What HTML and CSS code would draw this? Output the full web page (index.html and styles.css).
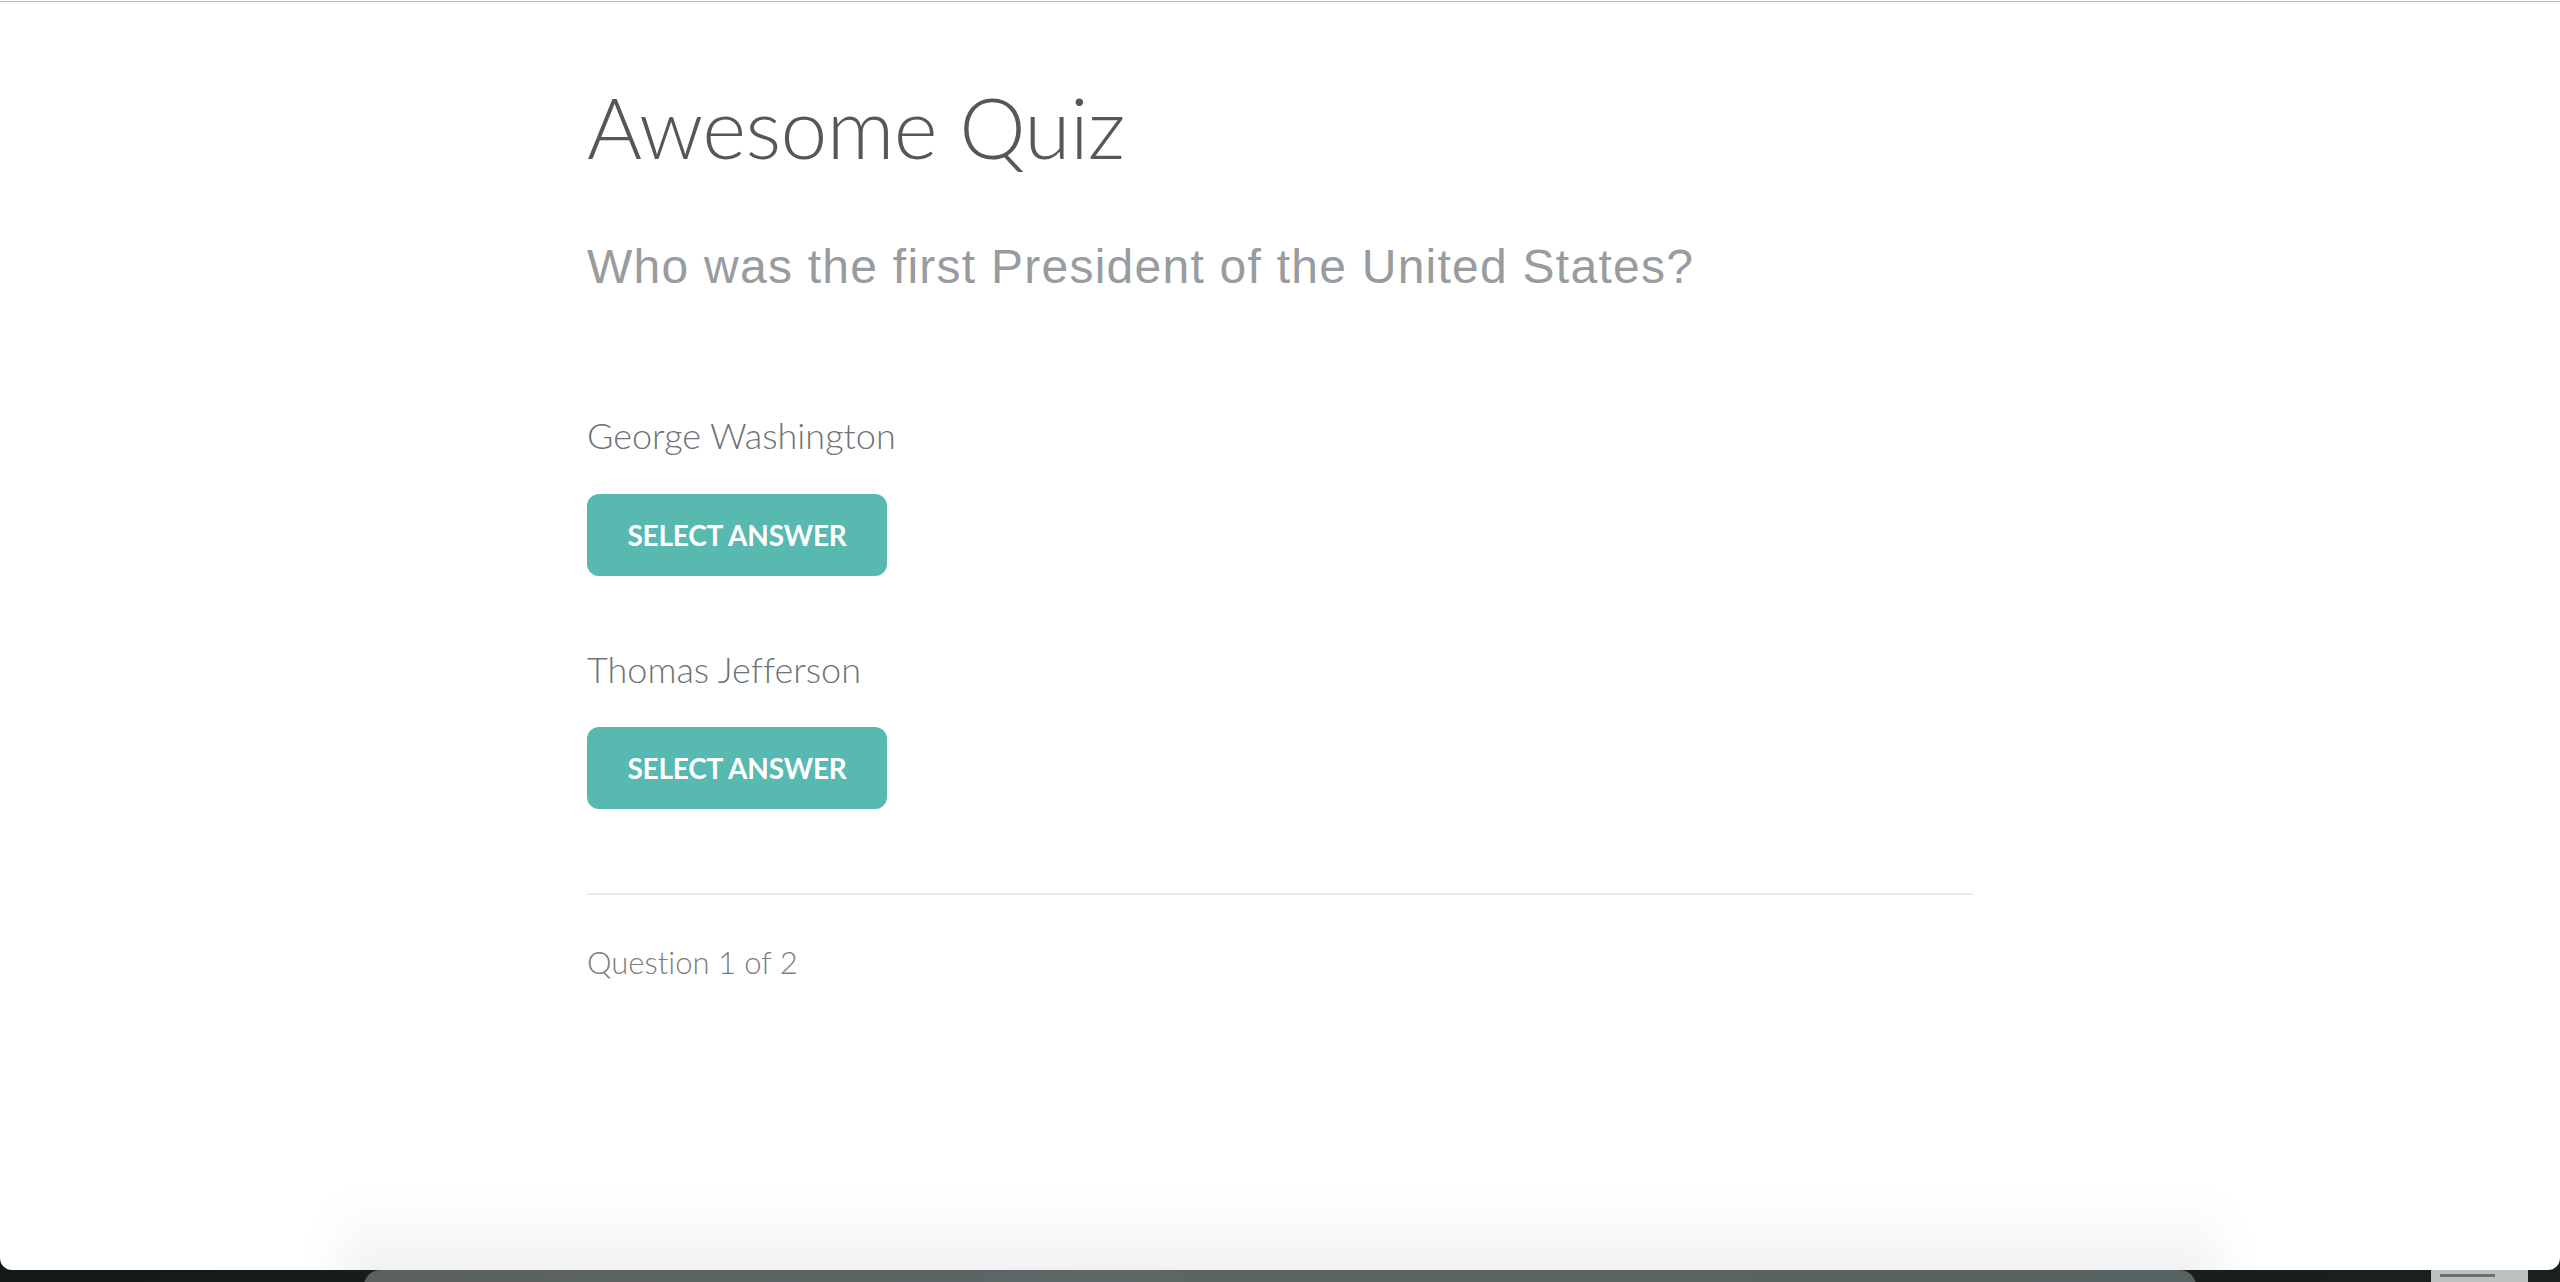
FILE: index.html
```html
<!DOCTYPE html>
<html lang="en">
<head>
<meta charset="utf-8">
<title>Awesome Quiz</title>
<link rel="stylesheet" href="styles.css">
</head>
<body>
<div class="desktop">
  <div class="window">
    <div class="topline"></div>
    <main class="quiz">
      <h1 class="title">Awesome Quiz</h1>
      <h2 class="question">Who was the first President of the United States?</h2>
      <div class="answers">
        <div class="answer">
          <p class="answer-text">George Washington</p>
          <button class="btn">SELECT ANSWER</button>
        </div>
        <div class="answer">
          <p class="answer-text">Thomas Jefferson</p>
          <button class="btn">SELECT ANSWER</button>
        </div>
      </div>
      <hr class="divider">
      <p class="progress">Question 1 of 2</p>
    </main>
    <div class="dock-glow"></div>
  </div>
  <div class="dock"></div>
  <div class="dock-item"><span class="dock-item-bar"></span></div>
</div>
</body>
</html>
```
FILE: styles.css
```css
html, body {
  margin: 0;
  padding: 0;
}
body {
  width: 2560px;
  height: 1282px;
  overflow: hidden;
  background: #181c1a;
  font-variant-ligatures: none;
}
.desktop {
  position: relative;
  width: 2560px;
  height: 1282px;
  background: linear-gradient(90deg, #141816 0%, #1d221f 30%, #161a18 60%, #1c201e 100%);
}
.window {
  position: relative;
  height: 1270px;
  background: #ffffff;
  border-radius: 0 0 12px 12px;
  overflow: hidden;
}
.topline {
  height: 1px;
  margin-top: 1px;
  background: #bdbdbd;
}
.quiz {
  width: 1386px;
  margin: 0 auto;
  padding-top: 75px;
  display: flex;
  flex-direction: column;
  align-items: flex-start;
}
.title {
  margin: 0;
  font-family: Lato, "Liberation Sans", sans-serif;
  font-weight: 300;
  font-size: 84px;
  line-height: 1.2;
  color: #54585c;
  letter-spacing: -0.6px;
}
.question {
  margin: 60px 0 0;
  font-family: "Liberation Sans", Arial, sans-serif;
  font-weight: 400;
  font-size: 48px;
  line-height: 1.2;
  color: #999c9f;
  letter-spacing: 1.25px;
}
.answers {
  margin-top: 119px;
  display: flex;
  flex-direction: column;
  align-items: flex-start;
  gap: 72px;
}
.answer {
  display: flex;
  flex-direction: column;
  align-items: flex-start;
  gap: 36px;
}
.answer-text {
  margin: 0;
  font-family: Lato, "Liberation Sans", sans-serif;
  font-weight: 300;
  font-size: 36px;
  line-height: 1.2;
  color: #6f7377;
}
.btn {
  display: inline-flex;
  align-items: center;
  justify-content: center;
  width: 300px;
  height: 82px;
  padding: 0;
  border: 0;
  border-radius: 12px;
  background: #58b9b1;
  color: #ffffff;
  font-family: Lato, "Liberation Sans", sans-serif;
  font-weight: 700;
  font-size: 28px;
  letter-spacing: -0.2px;
  cursor: pointer;
}
.divider {
  align-self: stretch;
  margin: 84px 0 0;
  height: 2px;
  border: 0;
  background: #e9e9e9;
}
.progress {
  margin: 49px 0 0;
  font-family: Lato, "Liberation Sans", sans-serif;
  font-weight: 300;
  font-size: 31px;
  line-height: 1.2;
  color: #7a7e81;
}
.dock-glow {
  position: absolute;
  left: 340px;
  width: 1880px;
  bottom: -40px;
  height: 110px;
  background: linear-gradient(to bottom, rgba(0,0,0,0) 0%, rgba(0,0,0,0.035) 40%, rgba(0,0,0,0.08) 100%);
  filter: blur(22px);
  pointer-events: none;
}
.dock {
  position: absolute;
  left: 364px;
  top: 1270px;
  width: 1832px;
  height: 30px;
  border-radius: 16px 16px 0 0;
  background: linear-gradient(90deg, #5a6160 0%, #5e6566 40%, #5b655f 60%, #566262 100%);
}
.dock-item {
  position: absolute;
  left: 2431px;
  top: 1270px;
  width: 97px;
  height: 20px;
  background: #bcc0c1;
}
.dock-item-bar {
  position: absolute;
  left: 9px;
  top: 4px;
  width: 55px;
  height: 3px;
  background: #6d7173;
}
```
